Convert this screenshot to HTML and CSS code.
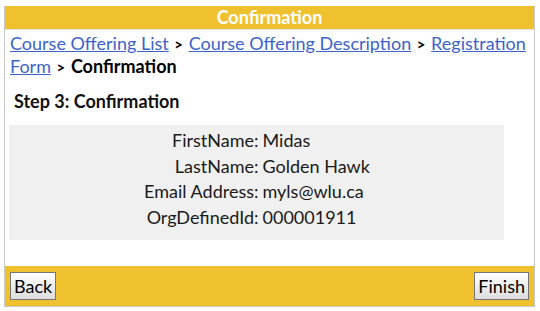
FILE: index.html
```html
<!DOCTYPE html>
<html lang="en">
<head>
    <meta charset="UTF-8">
    <meta name="viewport" content="width=device-width, initial-scale=1.0">
    <title>Confirmation</title>
    <link rel="stylesheet" href="styles.css">
</head>
<body>
    <div class="panel">
        <div class="panel-title">Confirmation</div>

        <div class="breadcrumb">
            <a href="#">Course Offering List</a> <span class="sep">&gt;</span>
            <a href="#">Course Offering Description</a> <span class="sep">&gt;</span>
            <a href="#">Registration Form</a> <span class="sep">&gt;</span>
            <strong>Confirmation</strong>
        </div>

        <h2 class="step">Step 3: Confirmation</h2>

        <!-- Summary of entered data -->
        <div class="summary">
            <div class="label">FirstName:</div><div class="value">Midas</div>
            <div class="label">LastName:</div><div class="value">Golden Hawk</div>
            <div class="label">Email Address:</div><div class="value">myls@wlu.ca</div>
            <div class="label">OrgDefinedId:</div><div class="value">000001911</div>
        </div>

        <div class="panel-footer">
            <button>Back</button>
            <button>Finish</button>
        </div>
    </div>
</body>
</html>
```

FILE: styles.css
```css
body {
    font-family: Lato, "Open Sans", sans-serif;
    background-color: #ffffff;
    color: #111;
    margin: 6px 5px 0 4px;
}
.panel {
    border: 1px solid #c8c8c8;
    border-top: none;
}
.panel-title {
    background-color: #f0c12f;
    color: #ffffff;
    font-weight: bold;
    font-size: 18px;
    text-align: center;
    height: 23px;
    line-height: 23px;
    border-bottom: 1px solid #e2e2e2;
}
.breadcrumb {
    font-size: 18px;
    line-height: 22px;
    padding: 2px 5px 0 5px;
    color: #000;
}
.breadcrumb a {
    color: #3d63c9;
}
.breadcrumb .sep {
    font-size: 15px;
    font-weight: bold;
    margin: 0 1px;
}
.breadcrumb strong {
    font-weight: bold;
}
.step {
    font-size: 18px;
    font-weight: bold;
    margin: 12px 0 0 9px;
    line-height: 22px;
}
.summary {
    background-color: #f0f0f0;
    margin: 13px 30px 0 4px;
    padding: 3px 0 10px 8px;
    display: grid;
    grid-template-columns: 1fr 1fr;
    column-gap: 4px;
    font-size: 18px;
    line-height: 25.6px;
    color: #1a1a1a;
}
.label {
    text-align: right;
}
.panel-footer {
    margin-top: 26px;
    background-color: #f0c12f;
    padding: 6px 5px;
    display: flex;
    justify-content: space-between;
}
button {
    font-family: Lato, "Open Sans", sans-serif;
    font-size: 18px;
    color: #000;
    height: 28px;
    padding: 0 3px;
    border: 1px solid #767676;
    background: linear-gradient(#ffffff, #dcdcdc);
    cursor: pointer;
}
```
